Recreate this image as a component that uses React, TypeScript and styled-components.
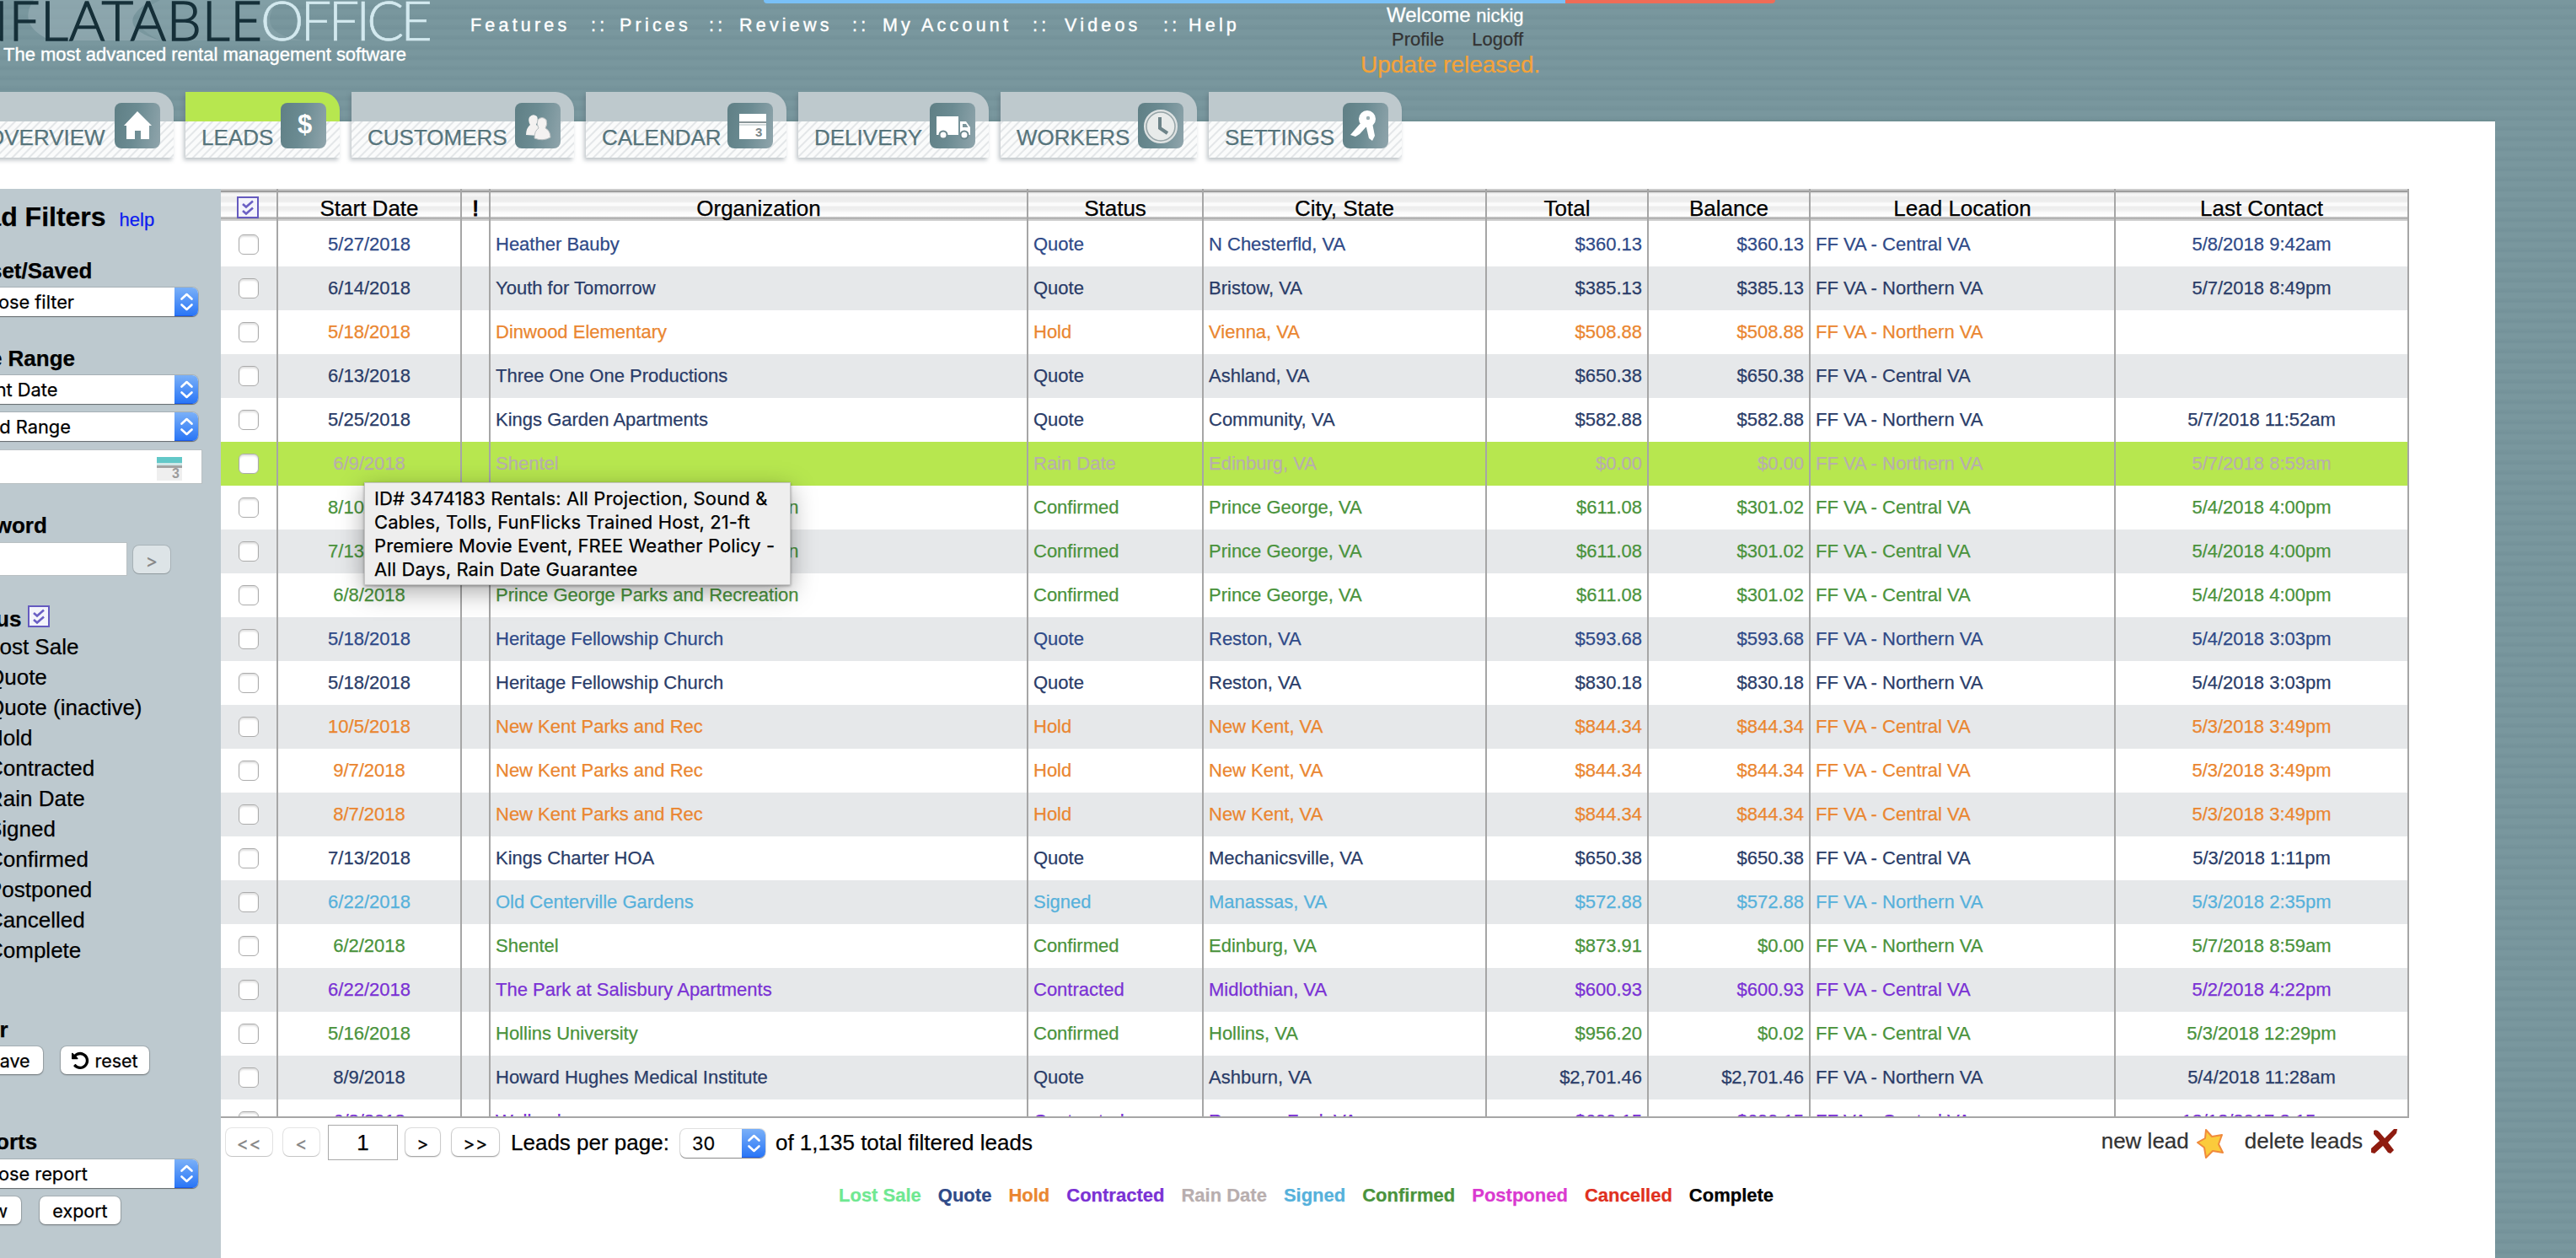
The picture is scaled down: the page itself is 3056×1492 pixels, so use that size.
import React from "react";
import styled, { createGlobalStyle, css } from "styled-components";

const sans = `"Liberation Sans", Arial, Helvetica, sans-serif`;
const ui = `Inter, "Liberation Sans", sans-serif`;

const stripes = css`
  background-color: #77959c;
  background-image: repeating-linear-gradient(
    to bottom,
    #79979e 0,
    #79979e 5px,
    #76949b 7px,
    #74929a 10px,
    #79979e 12px
  );
`;

const GlobalStyle = createGlobalStyle`
  html, body { margin: 0; padding: 0; }
  body {
    background: #fff;
    font-family: ${sans};
    color: #000;
    -webkit-text-stroke: 0.25px currentcolor;
  }
  *, *::before, *::after { box-sizing: border-box; }
`;

const Page = styled.div`
  position: relative;
  display: flex;
  width: 3056px;
  height: 1492px;
  overflow: hidden;
`;

const Main = styled.div`
  width: 2960px;
  display: flex;
  flex-direction: column;
`;

const Gutter = styled.div`
  width: 96px;
  ${stripes}
`;

/* ---------- top header ---------- */

const Header = styled.header`
  ${stripes}
  flex: none;
  height: 144px;
  display: flex;
  align-items: flex-start;
  border-bottom: 2px solid #6f8f93;
`;

const LogoArea = styled.div`
  width: 558px;
  height: 100px;
`;

const TopNav = styled.nav`
  display: flex;
  width: 1058px;
  padding-top: 17.5px;
  font-size: 21.5px;
  line-height: 25px;
  letter-spacing: 4.2px;
  color: #fff;
  white-space: pre;
  -webkit-text-stroke: 0.4px #fff;
`;

const NavItem = styled.span<{ $w: number }>`
  width: ${(p) => p.$w}px;
  flex: none;
`;

const Account = styled.div`
  width: 220px;
  padding-top: 3px;
  display: flex;
  flex-direction: column;
  align-items: flex-start;
`;

const Welcome = styled.div`
  padding-left: 29px;
  font-size: 24px;
  line-height: 30px;
  color: #fff;
  white-space: nowrap;
  -webkit-text-stroke: 0.3px #fff;
  small {
    font-size: 22px;
  }
`;

const AccountLinks = styled.div`
  display: flex;
  gap: 33px;
  padding-left: 35px;
  font-size: 22px;
  line-height: 26px;
  color: #333;
`;

const UpdateNote = styled.div`
  margin: -1px 0 0 -2px;
  font-size: 28px;
  line-height: 36px;
  color: #f4a339;
  white-space: nowrap;
`;

const LoadBar = styled.div`
  position: absolute;
  left: 906px;
  top: 0;
  width: 1200px;
  height: 4px;
  display: flex;
  border-radius: 0 0 6px 6px;
  overflow: hidden;
`;

const LoadPart = styled.div<{ $w: number; $c: string }>`
  width: ${(p) => p.$w}px;
  background: ${(p) => p.$c};
`;

/* ---------- tabs ---------- */

const Tabs = styled.div`
  flex: none;
  display: flex;
  gap: 14px;
  height: 78px;
  margin: -35px 0 37px -34px;
`;

const Tab = styled.div<{ $w: number; $active?: boolean }>`
  width: ${(p) => p.$w}px;
  height: 78px;
  flex: none;
  display: flex;
  align-items: flex-start;
  justify-content: space-between;
  padding: 13px 16px 0 19px;
  border-radius: 0 22px 0 0;
  background:
    linear-gradient(${(p) => (p.$active ? "#b7e74f, #b7e74f" : "#bec9cd, #bec9cd")}) 0 0 / 100% 35px no-repeat,
    repeating-linear-gradient(135deg, #fafbfb 0, #fafbfb 4px, #e3e6e8 5px, #e3e6e8 6px, #fafbfb 7px);
  box-shadow: -2px 3px 5px rgba(90, 105, 115, 0.4);
`;

const TabLabel = styled.span`
  padding-top: 26px;
  font-size: 26px;
  line-height: 30px;
  color: #56747b;
  white-space: nowrap;
`;

const TabIcon = styled.span`
  width: 54px;
  height: 54px;
  border-radius: 8px;
  background: linear-gradient(100deg, #5f7f85, #6b8b92 45%, #90a5ac);
  svg {
    display: block;
  }
`;

/* ---------- sidebar ---------- */

const Body = styled.div`
  flex: 1;
  display: flex;
  min-height: 0;
`;

const Sidebar = styled.aside`
  flex: none;
  width: 316px;
  margin-left: -54px;
  height: 1268px;
  background: #bdc9cf;
  display: flex;
  flex-direction: column;
  white-space: nowrap;
`;

const TitleRow = styled.div`
  display: flex;
  align-items: baseline;
  gap: 16px;
  padding-top: 15px;
  height: 81px;
`;

const Title = styled.h1`
  margin: 0;
  font-size: 32px;
  line-height: 36px;
`;

const HelpLink = styled.a`
  font-size: 22px;
  color: #0d1cf0;
`;

const Group = styled.section<{ $h: number }>`
  height: ${(p) => p.$h}px;
  flex: none;
  display: flex;
  flex-direction: column;
`;

const GroupTitle = styled.h2<{ $h?: number }>`
  margin: 0;
  height: ${(p) => p.$h ?? 36}px;
  flex: none;
  font-size: 26px;
  line-height: 32px;
  display: flex;
  gap: 8px;
`;

const Select = styled.div<{ $w: number; $pad: number }>`
  width: ${(p) => p.$w}px;
  height: 34px;
  flex: none;
  display: flex;
  justify-content: space-between;
  background: #fff;
  border-radius: 7px;
  overflow: hidden;
  font-family: ${ui};
  font-size: 21.8px;
  line-height: 34px;
  padding-left: ${(p) => p.$pad}px;
  box-shadow: 0 1px 1px rgba(0, 0, 0, 0.4), 0 0 0 1px rgba(0, 0, 0, 0.12);
`;

const Stepper = styled.span`
  width: 28px;
  height: 34px;
  background: linear-gradient(#7ab0f8, #2a76f6);
  border-bottom: 1px solid #1d5be8;
  svg {
    display: block;
  }
`;

const SelectGap = styled.div`
  height: 10px;
  flex: none;
`;

const DateField = styled.div`
  width: 294px;
  height: 41px;
  flex: none;
  margin-top: 10px;
  padding: 8px 23px 0 0;
  display: flex;
  justify-content: flex-end;
  background: #fff;
  border: 1px solid #b9c0c3;
`;

const KeywordRow = styled.div`
  display: flex;
  gap: 7px;
  align-items: center;
`;

const KeywordField = styled.div`
  width: 205px;
  height: 40px;
  background: #fff;
  border: 1px solid #b9c0c3;
`;

const Button = styled.button<{ $w: number; $muted?: boolean; $glass?: boolean }>`
  flex: none;
  width: ${(p) => p.$w}px;
  height: 33px;
  padding: 0;
  border: 0;
  border-radius: 7px;
  display: flex;
  align-items: center;
  justify-content: center;
  gap: 6px;
  font-family: ${ui};
  font-size: 21.5px;
  color: ${(p) => (p.$muted ? "#858585" : "#000")};
  background: ${(p) => (p.$glass ? "#dde4e7" : "#fff")};
  box-shadow: ${(p) =>
    p.$muted
      ? "0 1px 1px rgba(0,0,0,.15), 0 0 0 1px rgba(0,0,0,.1)"
      : "0 1px 2px rgba(0,0,0,.35), 0 0 0 1px rgba(0,0,0,.12)"};
`;

const Arrow = styled.span`
  padding-top: 3px;
  letter-spacing: 0.5px;
`;

const ButtonRow = styled.div<{ $gap: number }>`
  display: flex;
  gap: ${(p) => p.$gap}px;
`;

const StatusList = styled.ul`
  list-style: none;
  margin: 0;
  padding: 0 0 0 39px;
  font-size: 26px;
  line-height: 36px;
`;

/* ---------- table ---------- */

const Content = styled.main`
  position: relative;
  flex: 1;
  display: flex;
  flex-direction: column;
`;

const cols = "68px 218px 34px 638px 208px 336px 192px 192px 362px 348px";

const HeadRow = styled.div`
  display: grid;
  grid-template-columns: ${cols};
  width: 2596px;
  height: 38px;
  margin-bottom: 2px;
  flex: none;
  background: linear-gradient(
    to bottom,
    #cccccc 0, #cccccc 2px,
    #9d9d9d 2px, #9d9d9d 4px,
    #d6d6d6 4px, #f6f6f6 6px,
    #f6f6f6 8px, #ededed 10px,
    #ededed 15px, #fbfbfb 17px,
    #fbfbfb 20px, #ededed 21px,
    #efefef 25px, #fbfbfb 28px,
    #ffffff 33px, #cfcfcf 33px,
    #b0b0b0 35px, #b0b0b0 36px,
    #d0d0d0 36px, #d0d0d0 38px
  );
`;

const HeadCell = styled.div<{ $strong?: boolean }>`
  border-right: 2px solid #a6a6a6;
  padding-top: 5px;
  height: 40px;
  display: flex;
  align-items: center;
  justify-content: center;
  font-size: 26px;
  line-height: 34px;
  -webkit-text-stroke-width: ${(p) => (p.$strong ? 1.2 : 0.25)}px;
`;

const HeadToggle = styled(HeadCell)`
  padding: 3px 3px 0 0;
`;

const Rows = styled.div`
  width: 2596px;
  height: 1062px;
  flex: none;
  overflow: hidden;
  border-bottom: 2px solid #a6a6a6;
`;

const Row = styled.div<{ $color: string; $bg: string }>`
  display: grid;
  grid-template-columns: ${cols};
  height: 52px;
  color: ${(p) => p.$color};
  background: ${(p) => p.$bg};
  font-size: 22px;
  line-height: 52px;
  white-space: nowrap;
`;

const Cell = styled.div<{ $align?: "left" | "center" | "right" }>`
  border-right: 2px solid #a6a6a6;
  padding: 0 6px;
  text-align: ${(p) => p.$align ?? "left"};
`;

const CheckCell = styled(Cell)`
  display: flex;
  align-items: center;
  justify-content: center;
`;

const Checkbox = styled.span`
  width: 24px;
  height: 24px;
  border-radius: 6px;
  border: 1.5px solid #ababab;
  background: #fff;
  box-shadow: inset 0 2px 2px rgba(0, 0, 0, 0.12);
`;

const Tooltip = styled.div`
  position: absolute;
  left: 170px;
  top: 348px;
  width: 506px;
  height: 122px;
  padding: 4px 0 0 11px;
  background: #eeeeee;
  border: 1px solid #c4c4c4;
  box-shadow: 0 8px 28px rgba(0, 0, 0, 0.34), 0 1px 3px rgba(0, 0, 0, 0.35);
  font-family: ${ui};
  font-size: 22px;
  letter-spacing: 0.1px;
  line-height: 28px;
  white-space: pre;
`;

/* ---------- footer ---------- */

const Pager = styled.div`
  width: 2596px;
  height: 64px;
  padding: 8px 13px 0 6px;
  display: flex;
  align-items: flex-start;
  font-size: 26px;
  white-space: nowrap;
`;

const PageField = styled.div`
  width: 83px;
  height: 42px;
  margin: 0 9px 0 10px;
  border: 1px solid #a9a9a9;
  text-align: center;
  font-size: 26px;
  line-height: 40px;
`;

const PagerButtons = styled.div<{ $gap: number }>`
  display: flex;
  gap: ${(p) => p.$gap}px;
  padding-top: 4px;
`;

const PagerText = styled.span<{ $l: number }>`
  margin-left: ${(p) => p.$l}px;
  line-height: 42px;
`;

const PagerSelect = styled.div`
  margin-left: 13px;
  padding-top: 5px;
`;

const Actions = styled.div`
  margin-left: auto;
  display: flex;
  align-items: flex-start;
  color: #333;
  line-height: 38px;
`;

const ActionIcon = styled.svg<{ $r: number }>`
  display: block;
  margin: 4px ${(p) => p.$r}px 0 8px;
`;

const Legend = styled.div`
  display: flex;
  gap: 20px;
  padding: 13px 0 0 733px;
  font-size: 22px;
  font-weight: bold;
  line-height: 30px;
  white-space: nowrap;
`;

const LegendItem = styled.span<{ $c: string }>`
  color: ${(p) => p.$c};
`;

/* ---------- icons ---------- */

const CheckAll = () => (
  <svg width="26" height="26" viewBox="0 0 26 26">
    <rect x="1" y="1" width="24" height="24" fill="#f4f4fb" stroke="#655abf" strokeWidth="2" />
    <path d="M7 9 L11 12.5 L19 5.5 M7 17 L11 20.5 L19 13.5" fill="none" stroke="#6a5fc4" strokeWidth="2.6" />
  </svg>
);

const Chevrons = () => (
  <Stepper>
    <svg width="28" height="34" viewBox="0 0 28 34">
      <path
        d="M8.5 13.5 L14.5 8 L20.5 13.5 M8.5 20.5 L14.5 26 L20.5 20.5"
        fill="none"
        stroke="#fff"
        strokeWidth="2.6"
        strokeLinecap="round"
        strokeLinejoin="round"
      />
    </svg>
  </Stepper>
);

const UndoIcon = () => (
  <svg width="21" height="24" viewBox="0 100 1600 1600">
    <path d="M1536 896q0 156-61 298t-164 245-245 164-298 61q-172 0-327-72.500t-264-204.500q-7-10-6.500-22.500t8.500-20.500l137-138q10-9 25-9 16 2 23 12 73 95 179 147t225 52q104 0 198.500-40.500t163.500-109.500 109.500-163.500 40.500-198.500-40.500-198.500-109.500-163.500-163.500-109.500-198.500-40.500q-98 0-188 35.500t-160 101.500l137 138q31 30 14 69-17 40-59 40h-448q-26 0-45-19t-19-45v-448q0-42 40-59 39-17 69 14l130 129q107-101 244.500-156.500t284.500-55.500q156 0 298 61t245 164 164 245 61 298z" />
  </svg>
);

const SaveIcon = () => (
  <svg width="21" height="24" viewBox="0 0 21 24">
    <path d="M2 3 H15 L19 7 V21 H2 Z M6 4 V9 H13 V4 M6 21 V14 H15 V21" fill="none" stroke="#000" strokeWidth="2.4" />
  </svg>
);

const DateIcon = () => (
  <svg width="30" height="30" viewBox="0 0 30 30">
    <rect width="30" height="28" fill="#efefef" />
    <rect width="30" height="7" fill="#62c8c8" />
    <rect y="7" width="30" height="3" fill="#cfe8e8" />
    <rect y="10" width="30" height="3" fill="#a4a4a4" />
    <text x="18" y="25" fontSize="16" fontWeight="bold" fill="#9b9b9b" fontFamily="Liberation Sans">3</text>
  </svg>
);

type IconName = "home" | "dollar" | "people" | "calendar" | "truck" | "clock" | "key";

const drawings: Record<IconName, React.ReactNode> = {
  home: <path d="M27 10 L44 27 L41 27 L41 43 L31 43 L31 33 L24 33 L24 43 L14 43 L14 27 L11 27 Z" fill="#fff" />,
  dollar: (
    <text x="28.5" y="36" fontSize="31" fontWeight="bold" textAnchor="middle" fill="#fff" fontFamily="Liberation Sans">
      $
    </text>
  ),
  people: (
    <g fill="#f4f2f1">
      <path d="M13 38 Q13 30 18 26 Q15 21 17 17 Q21 12 26 16 Q28 20 25 26 L30 30 L28 39 Z" />
      <path d="M23 42 Q23 33 28 30 Q25 25 27 20 Q32 15 37 20 Q39 25 36 30 Q42 33 42 41 Q33 46 23 42 Z" stroke="#b9bfc1" strokeWidth="1" />
    </g>
  ),
  calendar: (
    <g>
      <rect x="14" y="13" width="32" height="30" fill="#fff" />
      <path d="M14 23 H46" stroke="#8a9699" strokeWidth="2" />
      <path d="M14 26 H46" stroke="#d6dcdd" strokeWidth="2" />
      <text x="33" y="40" fontSize="15" fontWeight="bold" fill="#7b8789" fontFamily="Liberation Sans">3</text>
    </g>
  ),
  truck: (
    <g fill="#fff">
      <rect x="8" y="16" width="26" height="22" />
      <path d="M36 38 V22 H43 L48 29 V38 Z" />
      <path d="M39 25 H43 L45.500 29 H39 Z" fill="#7e969c" />
      <circle cx="16" cy="38" r="4.500" stroke="#6b868c" strokeWidth="2" />
      <circle cx="41" cy="38" r="4.500" stroke="#6b868c" strokeWidth="2" />
    </g>
  ),
  clock: (
    <g>
      <circle cx="27" cy="28" r="18" fill="#e8ebea" stroke="#dfe3e3" strokeWidth="4" />
      <circle cx="27" cy="28" r="17" fill="none" stroke="#97a5a8" strokeWidth="1.5" />
      <path d="M26 17 V30 L35 36" fill="none" stroke="#6d8388" strokeWidth="4" />
    </g>
  ),
  key: (
    <g fill="#fff">
      <circle cx="29" cy="19" r="10" />
      <path d="M22 23 L9 38 L15 40 L20 37 L29 27 Z" />
      <path d="M27 25 L31 42 L35 45 L38 39 L35 24 Z" />
      <circle cx="30" cy="18" r="2.200" fill="#9db0b4" />
    </g>
  ),
};

const tabs: { label: string; w: number; icon: IconName; active?: boolean }[] = [
  { label: "OVERVIEW", w: 240, icon: "home" },
  { label: "LEADS", w: 183, icon: "dollar", active: true },
  { label: "CUSTOMERS", w: 264, icon: "people" },
  { label: "CALENDAR", w: 238, icon: "calendar" },
  { label: "DELIVERY", w: 226, icon: "truck" },
  { label: "WORKERS", w: 233, icon: "clock" },
  { label: "SETTINGS", w: 229, icon: "key" },
];

const nav: [string, number][] = [
  ["Features", 143],
  ["::", 34],
  ["Prices", 106],
  ["::", 36],
  ["Reviews", 134],
  ["::", 36],
  ["My Account", 178],
  ["::", 38],
  ["Videos", 117],
  ["::", 30],
  ["Help", 90],
];

/* ---------- data ---------- */

const colors: Record<string, string> = {
  "Lost Sale": "#6fe891",
  Quote: "#2f4a88",
  Hold: "#ea8630",
  Contracted: "#7a31d4",
  "Rain Date": "#b8aeae",
  Signed: "#56b1db",
  Confirmed: "#4a933c",
  Postponed: "#da3ad0",
  Cancelled: "#e0301e",
  Complete: "#000000",
};

const headings = ["Start Date", "!", "Organization", "Status", "City, State", "Total", "Balance", "Lead Location", "Last Contact"];

const C = "FF VA - Central VA";
const N = "FF VA - Northern VA";

type Lead = [string, string, string, string, string, string, string, string];

const leads: Lead[] = [
  ["5/27/2018", "Heather Bauby", "Quote", "N Chesterfld, VA", "$360.13", "$360.13", C, "5/8/2018 9:42am"],
  ["6/14/2018", "Youth for Tomorrow", "Quote", "Bristow, VA", "$385.13", "$385.13", N, "5/7/2018 8:49pm"],
  ["5/18/2018", "Dinwood Elementary", "Hold", "Vienna, VA", "$508.88", "$508.88", N, ""],
  ["6/13/2018", "Three One One Productions", "Quote", "Ashland, VA", "$650.38", "$650.38", C, ""],
  ["5/25/2018", "Kings Garden Apartments", "Quote", "Community, VA", "$582.88", "$582.88", N, "5/7/2018 11:52am"],
  ["6/9/2018", "Shentel", "Rain Date", "Edinburg, VA", "$0.00", "$0.00", N, "5/7/2018 8:59am"],
  ["8/10/2018", "Prince George Parks and Recreation", "Confirmed", "Prince George, VA", "$611.08", "$301.02", C, "5/4/2018 4:00pm"],
  ["7/13/2018", "Prince George Parks and Recreation", "Confirmed", "Prince George, VA", "$611.08", "$301.02", C, "5/4/2018 4:00pm"],
  ["6/8/2018", "Prince George Parks and Recreation", "Confirmed", "Prince George, VA", "$611.08", "$301.02", C, "5/4/2018 4:00pm"],
  ["5/18/2018", "Heritage Fellowship Church", "Quote", "Reston, VA", "$593.68", "$593.68", N, "5/4/2018 3:03pm"],
  ["5/18/2018", "Heritage Fellowship Church", "Quote", "Reston, VA", "$830.18", "$830.18", N, "5/4/2018 3:03pm"],
  ["10/5/2018", "New Kent Parks and Rec", "Hold", "New Kent, VA", "$844.34", "$844.34", C, "5/3/2018 3:49pm"],
  ["9/7/2018", "New Kent Parks and Rec", "Hold", "New Kent, VA", "$844.34", "$844.34", C, "5/3/2018 3:49pm"],
  ["8/7/2018", "New Kent Parks and Rec", "Hold", "New Kent, VA", "$844.34", "$844.34", C, "5/3/2018 3:49pm"],
  ["7/13/2018", "Kings Charter HOA", "Quote", "Mechanicsville, VA", "$650.38", "$650.38", C, "5/3/2018 1:11pm"],
  ["6/22/2018", "Old Centerville Gardens", "Signed", "Manassas, VA", "$572.88", "$572.88", N, "5/3/2018 2:35pm"],
  ["6/2/2018", "Shentel", "Confirmed", "Edinburg, VA", "$873.91", "$0.00", N, "5/7/2018 8:59am"],
  ["6/22/2018", "The Park at Salisbury Apartments", "Contracted", "Midlothian, VA", "$600.93", "$600.93", C, "5/2/2018 4:22pm"],
  ["5/16/2018", "Hollins University", "Confirmed", "Hollins, VA", "$956.20", "$0.02", C, "5/3/2018 12:29pm"],
  ["8/9/2018", "Howard Hughes Medical Institute", "Quote", "Ashburn, VA", "$2,701.46", "$2,701.46", N, "5/4/2018 11:28am"],
  ["6/8/2018", "Wellsed", "Contracted", "Reasons Foal, VA", "$699.15", "$699.15", C, "12/12/2017 2:15pm"],
];

const brightQuotes = [0, 9];
const hovered = 5;

const rowColor = (lead: Lead, i: number) =>
  lead[2] === "Quote" && !brightQuotes.includes(i) ? "#2a3c68" : colors[lead[2]];

const rowBg = (i: number) => (i === hovered ? "#b7e74f" : i % 2 ? "#e6e8ea" : "#ffffff");

const statuses = [
  "Lost Sale",
  "Quote",
  "Quote (inactive)",
  "Hold",
  "Contracted",
  "Rain Date",
  "Signed",
  "Confirmed",
  "Postponed",
  "Cancelled",
  "Complete",
];

const aligns = ["center", "left", "left", "left", "right", "right", "left", "center"] as const;

/* ---------- parts ---------- */

const Logo = () => (
  <svg width="540" height="100" viewBox="0 0 540 100" fontFamily="Lato">
    <path d="M40 0 H180 Q130 30 190 48 L60 48 Q20 30 40 0 Z" fill="#9db3b9" opacity="0.55" />
    <path d="M190 0 H330 Q300 40 360 48 H190 Q140 25 190 0 Z" fill="#8fa9b0" opacity="0.45" />
    <text x="-57" y="48" fontSize="65" fontWeight="300" fill="#152f38" textLength="368" stroke="#152f38" strokeWidth="1.4">
      INFLATABLE
    </text>
    <text x="309" y="48" fontSize="65" fontWeight="300" fill="#d3e9ef" stroke="#d3e9ef" strokeWidth="0.6" textLength="204">
      OFFICE
    </text>
    <text
      x="4"
      y="72"
      fontSize="22"
      fill="#fff"
      stroke="#fff"
      strokeWidth="0.4"
      textLength="478"
      fontFamily="Liberation Sans"
    >
      The most advanced rental management software
    </text>
  </svg>
);

const Filters = () => (
  <Sidebar>
    <TitleRow>
      <Title>Lead Filters</Title>
      <HelpLink>help</HelpLink>
    </TitleRow>
    <Group $h={104}>
      <GroupTitle>Preset/Saved</GroupTitle>
      <Select $w={289} $pad={10}>
        Choose filter
        <Chevrons />
      </Select>
    </Group>
    <Group $h={198}>
      <GroupTitle>Date Range</GroupTitle>
      <Select $w={289} $pad={11}>
        Event Date
        <Chevrons />
      </Select>
      <SelectGap />
      <Select $w={289} $pad={11}>
        Fixed Range
        <Chevrons />
      </Select>
      <DateField>
        <DateIcon />
      </DateField>
    </Group>
    <Group $h={111}>
      <GroupTitle>Keyword</GroupTitle>
      <KeywordRow>
        <KeywordField />
        <Button $w={44} $muted $glass>
          <Arrow>&gt;</Arrow>
        </Button>
      </KeywordRow>
    </Group>
    <Group $h={487}>
      <GroupTitle $h={31}>
        Status
        <CheckAll />
      </GroupTitle>
      <StatusList>
        {statuses.map((s) => (
          <li key={s}>{s}</li>
        ))}
      </StatusList>
    </Group>
    <Group $h={133}>
      <GroupTitle>Filter</GroupTitle>
      <ButtonRow $gap={21}>
        <Button $w={105}>
          <SaveIcon />
          save
        </Button>
        <Button $w={105}>
          <UndoIcon />
          reset
        </Button>
      </ButtonRow>
    </Group>
    <Group $h={130}>
      <GroupTitle $h={37}>Reports</GroupTitle>
      <Select $w={289} $pad={10}>
        Choose report
        <Chevrons />
      </Select>
      <SelectGap />
      <ButtonRow $gap={22}>
        <Button $w={79}>view</Button>
        <Button $w={96}>export</Button>
      </ButtonRow>
    </Group>
  </Sidebar>
);

export default function App() {
  return (
    <Page>
      <GlobalStyle />
      <Main>
        <Header>
          <LogoArea>
            <Logo />
          </LogoArea>
          <TopNav>
            {nav.map(([label, w], i) => (
              <NavItem key={i} $w={w}>
                {label}
              </NavItem>
            ))}
          </TopNav>
          <Account>
            <Welcome>
              Welcome <small>nickig</small>
            </Welcome>
            <AccountLinks>
              <span>Profile</span>
              <span>Logoff</span>
            </AccountLinks>
            <UpdateNote>Update released.</UpdateNote>
          </Account>
        </Header>
        <Tabs>
          {tabs.map((t) => (
            <Tab key={t.label} $w={t.w} $active={t.active}>
              <TabLabel>{t.label}</TabLabel>
              <TabIcon>
                <svg width="54" height="54" viewBox="0 0 54 54">
                  {drawings[t.icon]}
                </svg>
              </TabIcon>
            </Tab>
          ))}
        </Tabs>
        <Body>
          <Filters />
          <Content>
            <HeadRow>
              <HeadToggle>
                <CheckAll />
              </HeadToggle>
              {headings.map((h) => (
                <HeadCell key={h} $strong={h === "!"}>
                  {h}
                </HeadCell>
              ))}
            </HeadRow>
            <Rows>
              {leads.map((lead, i) => (
                <Row key={i} $color={rowColor(lead, i)} $bg={rowBg(i)}>
                  <CheckCell>
                    <Checkbox />
                  </CheckCell>
                  <Cell $align="center">{lead[0]}</Cell>
                  <Cell />
                  {lead.slice(1).map((value, c) => (
                    <Cell key={c} $align={aligns[c + 1]}>
                      {value}
                    </Cell>
                  ))}
                </Row>
              ))}
            </Rows>
            <Tooltip>
              {"ID# 3474183 Rentals: All Projection, Sound &\nCables, Tolls, FunFlicks Trained Host, 21-ft\nPremiere Movie Event, FREE Weather Policy -\nAll Days, Rain Date Guarantee"}
            </Tooltip>
            <Pager>
              <PagerButtons $gap={13}>
                <Button $w={55} $muted>
                  <Arrow>&lt;&lt;</Arrow>
                </Button>
                <Button $w={43} $muted>
                  <Arrow>&lt;</Arrow>
                </Button>
              </PagerButtons>
              <PageField>1</PageField>
              <PagerButtons $gap={14}>
                <Button $w={41}>
                  <Arrow>&gt;</Arrow>
                </Button>
                <Button $w={56}>
                  <Arrow>&gt;&gt;</Arrow>
                </Button>
              </PagerButtons>
              <PagerText $l={14}>Leads per page:</PagerText>
              <PagerSelect>
                <Select $w={101} $pad={14}>
                  30
                  <Chevrons />
                </Select>
              </PagerSelect>
              <PagerText $l={12}>of 1,135 total filtered leads</PagerText>
              <Actions>
                new lead
                <ActionIcon $r={24} width="34" height="36" viewBox="0 0 34 36">
                  <path
                    d="M12 2 L19 10 L31 8 L27 19 L32 29 L20 27 L12 35 L10 23 L2 17 L11 12 Z"
                    fill="#fbcb3c"
                    stroke="#f08a3c"
                    strokeWidth="2"
                    strokeLinejoin="round"
                  />
                </ActionIcon>
                delete leads
                <ActionIcon $r={0} width="34" height="32" viewBox="0 0 34 32">
                  <path
                    d="M5 3 Q9 1 12 5 L18 12 L29 1 L33 1 L32 6 L22 17 L29 26 L25 30 L22 29 L16 21 L6 30 L2 29 L2 24 L12 15 L5 7 Z"
                    fill="#8f1c10"
                  />
                </ActionIcon>
              </Actions>
            </Pager>
            <Legend>
              {Object.keys(colors).map((name) => (
                <LegendItem key={name} $c={colors[name]}>
                  {name}
                </LegendItem>
              ))}
            </Legend>
          </Content>
        </Body>
      </Main>
      <Gutter />
      <LoadBar>
        <LoadPart $w={951} $c="#79c0f7" />
        <LoadPart $w={249} $c="#ee6c57" />
      </LoadBar>
    </Page>
  );
}
